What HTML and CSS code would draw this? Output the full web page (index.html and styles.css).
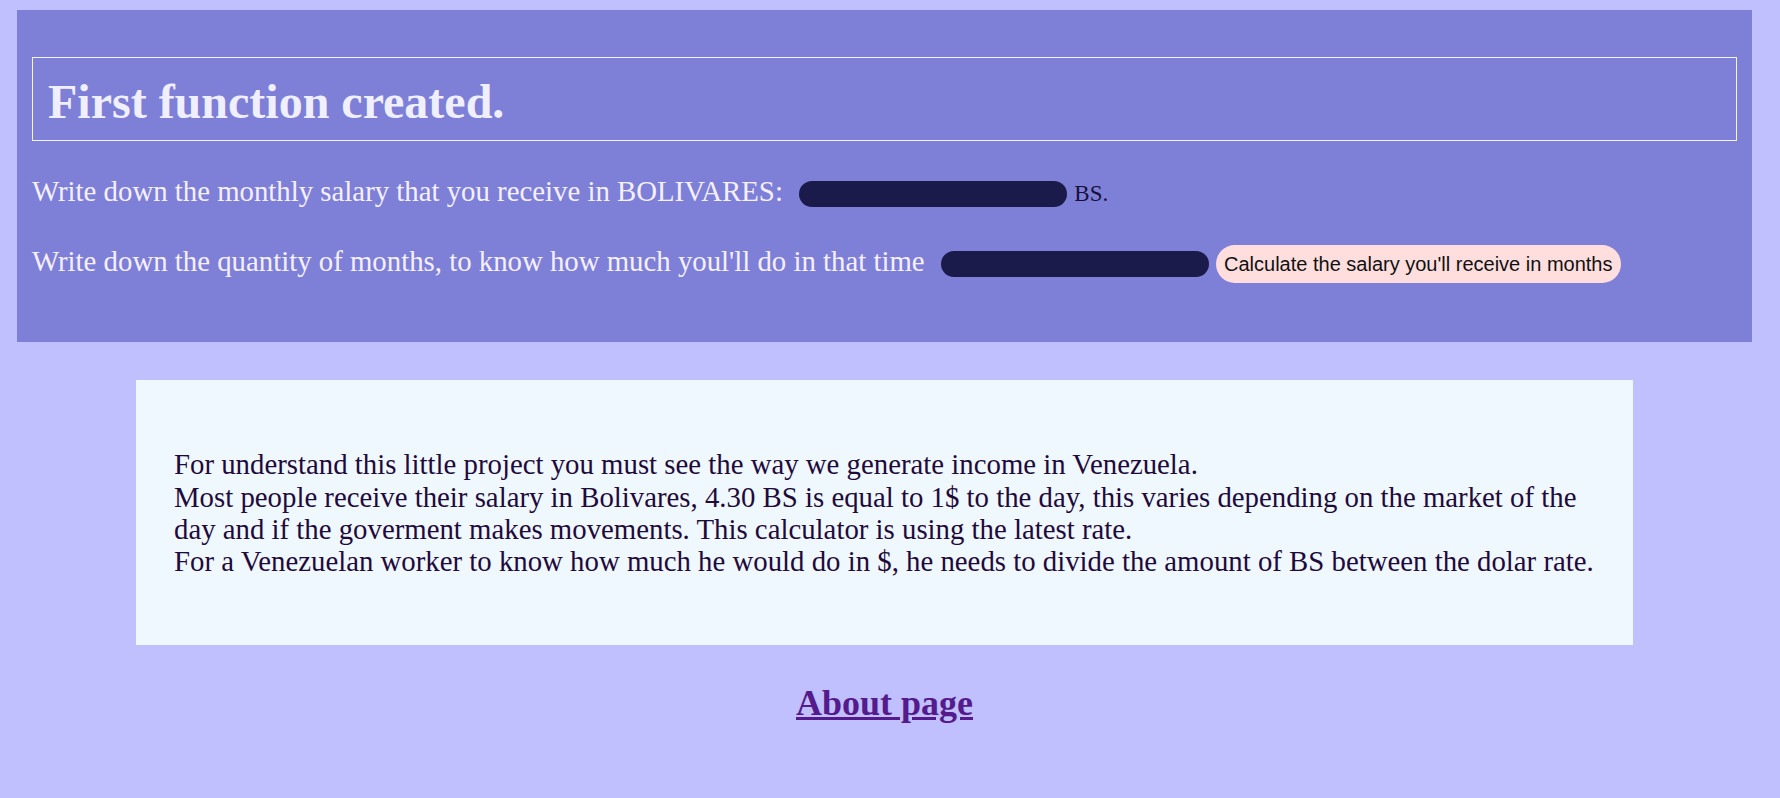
FILE: index.html
```html
<!DOCTYPE html>
<html lang="en">
<head>
<meta charset="utf-8">
<title>First function created.</title>
<link rel="stylesheet" href="styles.css">
</head>
<body>
<div class="page">
  <header class="panel">
    <h1 class="title">First function created.</h1>
    <p class="row row-first"><span class="label">Write down the monthly salary that you receive in BOLIVARES: </span><input class="field" type="text"> <span class="unit">BS.</span></p>
    <p class="row row-second"><span class="label">Write down the quantity of months, to know how much youl'll do in that time </span><input class="field" type="text"> <button class="calc" type="button">Calculate the salary you'll receive in months</button></p>
  </header>
  <section class="info">
    <p class="info-text">For understand this little project you must see the way we generate income in Venezuela.<br>Most people receive their salary in Bolivares, 4.30 BS is equal to 1$ to the day, this varies depending on the market of the day and if the goverment makes movements. This calculator is using the latest rate.<br>For a Venezuelan worker to know how much he would do in $, he needs to divide the amount of BS between the dolar rate.</p>
  </section>
  <h2 class="about"><a class="about-link" href="#about">About page</a></h2>
</div>
</body>
</html>
```

FILE: styles.css
```css
html, body {
  margin: 0;
  padding: 0;
}

body {
  background: #c0bfff;
  font-family: "Liberation Serif", "Times New Roman", serif;
}

.page {
  padding: 10px 28px 1px 17px;
}

.panel {
  display: flow-root;
  background: #7e7fd6;
  padding: 0 15px 59px;
}

.title {
  margin: 47px 0 0;
  border: 1px solid #f4f2ff;
  padding: 16px 14px 11px 15px;
  font-size: 48px;
  font-weight: bold;
  color: #f0efff;
  line-height: normal;
}

.row {
  margin: 0;
  font-size: 28.8px;
  line-height: normal;
  white-space: nowrap;
}

.row-first {
  margin-top: 34px;
}

.row-second {
  margin-top: 37px;
}

.label {
  color: #f5f0ff;
}

.field {
  box-sizing: border-box;
  width: 268px;
  height: 26px;
  margin: 0 0 0 9px;
  padding: 0 12px;
  border: none;
  border-radius: 13px;
  background: #1b1b4b;
  color: #ffffff;
  vertical-align: middle;
  outline: none;
}

.unit {
  color: #15103a;
  font-size: 23px;
}

.calc {
  box-sizing: border-box;
  height: 38px;
  padding: 0 8px;
  margin: 0;
  border: none;
  border-radius: 19px;
  background: #ffdedd;
  color: #111111;
  font-family: "Liberation Sans", Arial, sans-serif;
  font-size: 20px;
  vertical-align: middle;
}

.info {
  margin: 38px 119px 0;
  background: #f0f8ff;
  padding: 68px 24px 68px 38px;
}

.info-text {
  margin: 0;
  font-size: 28.8px;
  line-height: 32.2px;
  color: #1f0b3b;
}

.about {
  margin: 37px 0 0;
  text-align: center;
  font-size: 36px;
  line-height: normal;
}

.about-link {
  color: #551a8b;
}
```
